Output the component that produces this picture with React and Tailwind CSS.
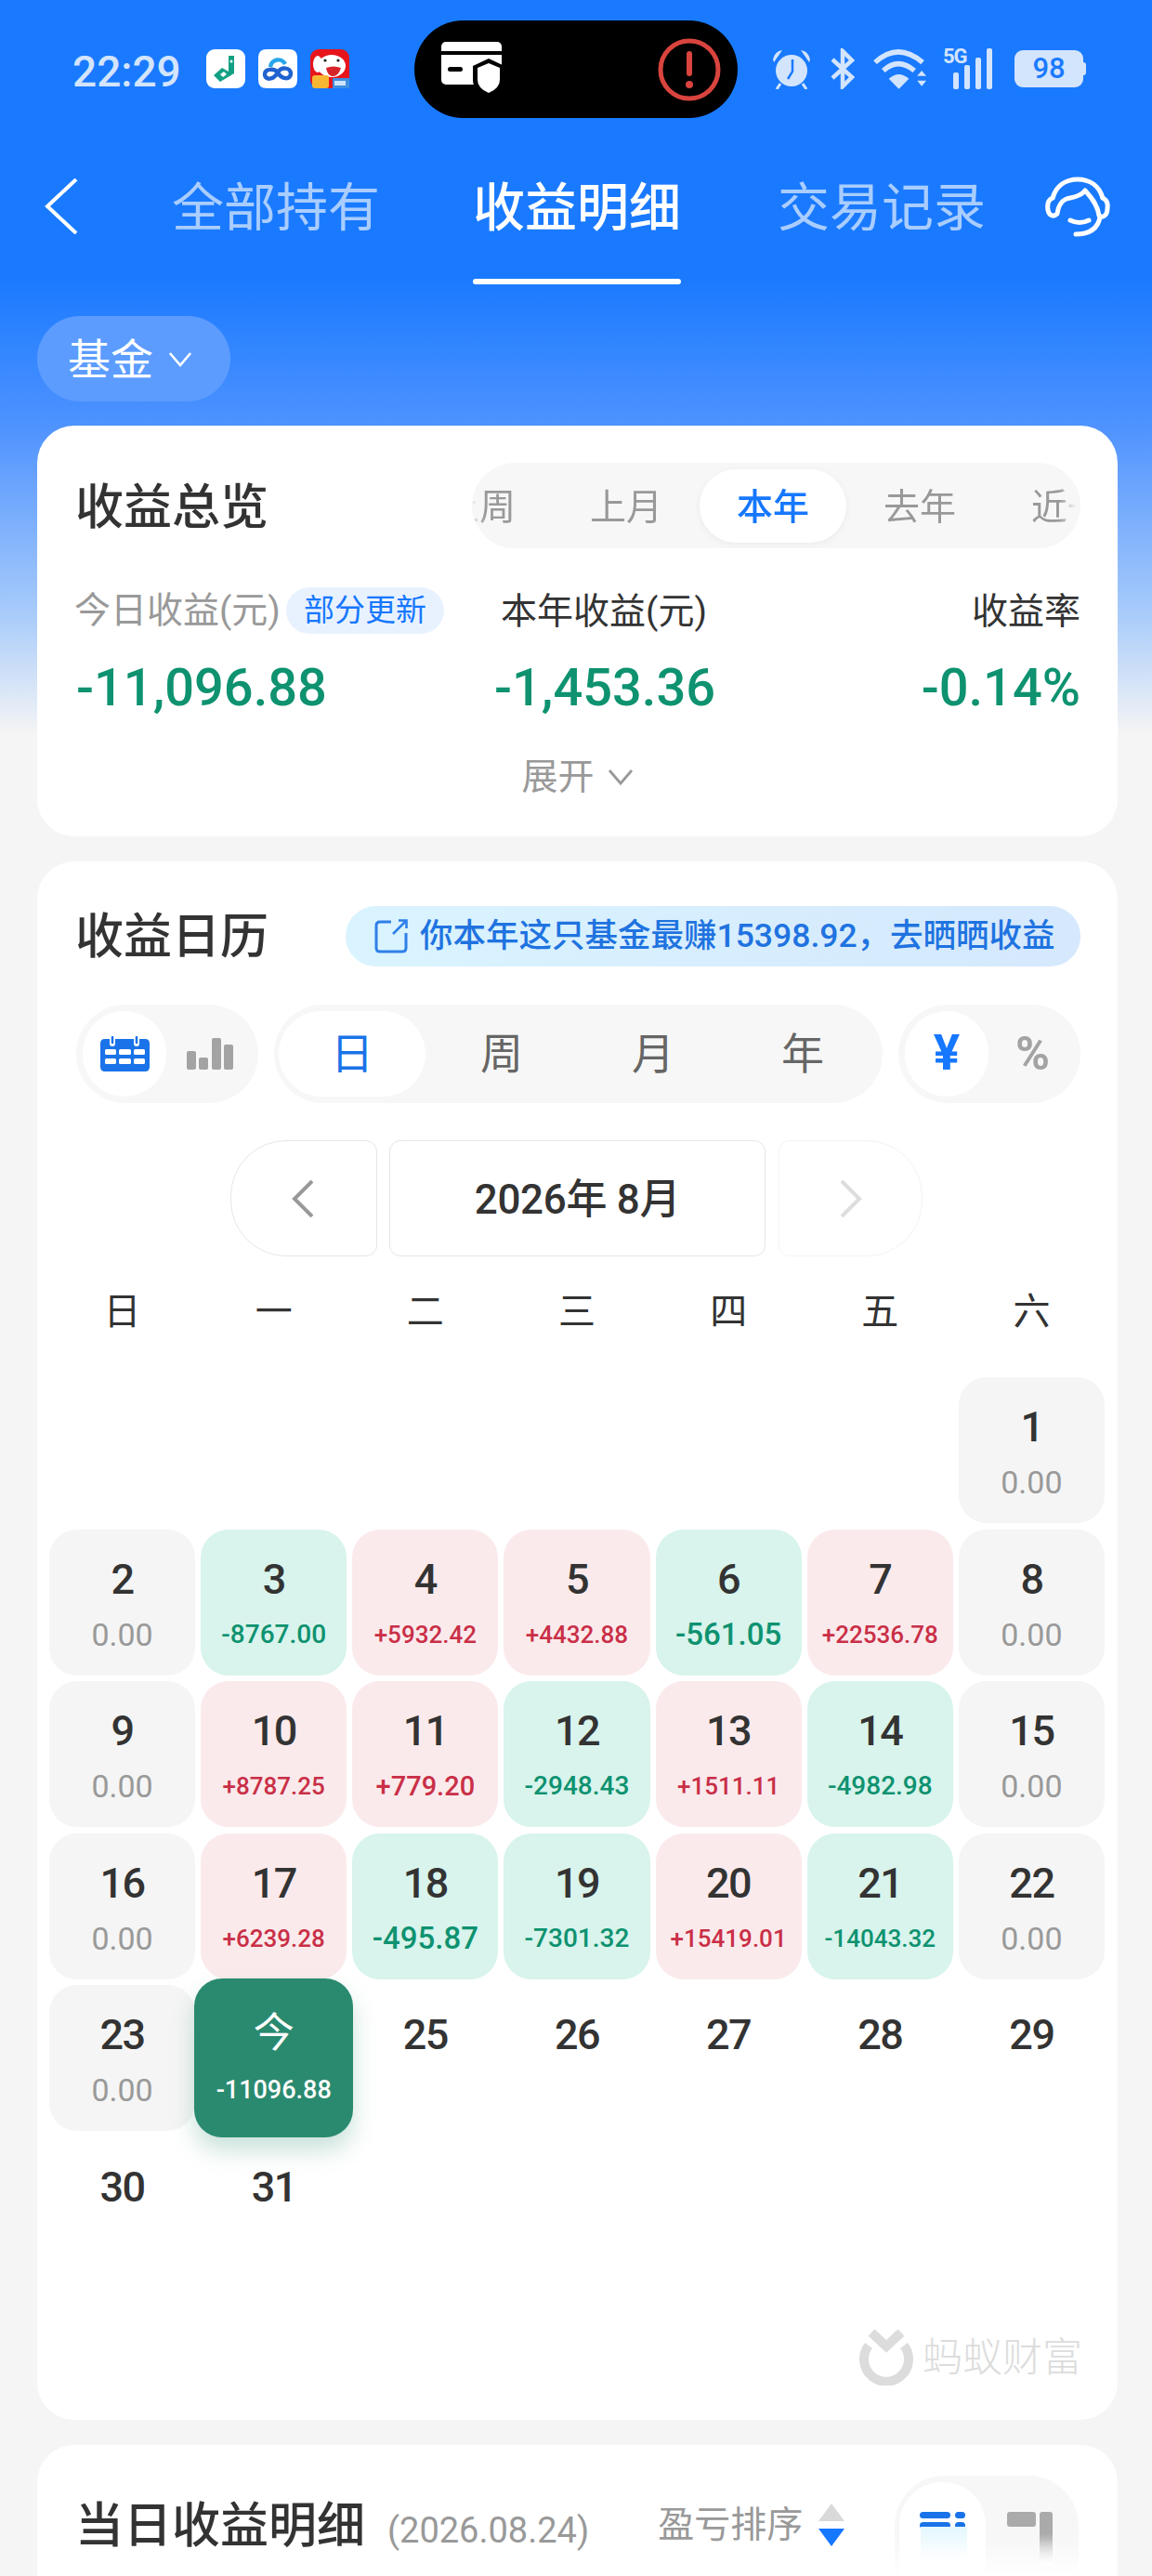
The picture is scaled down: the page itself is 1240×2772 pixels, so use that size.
const weekdays = ["日", "一", "二", "三", "四", "五", "六"]

// value font shrinks with the number so it fits the cell, same as the app does
const days = [
  { d: 1, v: "0.00" },
  { d: 2, v: "0.00" },
  { d: 3, v: "-8767.00", t: "g", s: "text-[28px]" },
  { d: 4, v: "+5932.42", t: "r", s: "text-[26px]" },
  { d: 5, v: "+4432.88", t: "r", s: "text-[26px]" },
  { d: 6, v: "-561.05", t: "g", s: "text-[33px]" },
  { d: 7, v: "+22536.78", t: "r", s: "text-[26px]" },
  { d: 8, v: "0.00" },
  { d: 9, v: "0.00" },
  { d: 10, v: "+8787.25", t: "r", s: "text-[26px]" },
  { d: 11, v: "+779.20", t: "r", s: "text-[29px]" },
  { d: 12, v: "-2948.43", t: "g", s: "text-[28px]" },
  { d: 13, v: "+1511.11", t: "r", s: "text-[26px]" },
  { d: 14, v: "-4982.98", t: "g", s: "text-[28px]" },
  { d: 15, v: "0.00" },
  { d: 16, v: "0.00" },
  { d: 17, v: "+6239.28", t: "r", s: "text-[26px]" },
  { d: 18, v: "-495.87", t: "g", s: "text-[33px]" },
  { d: 19, v: "-7301.32", t: "g", s: "text-[28px]" },
  { d: 20, v: "+15419.01", t: "r", s: "text-[26px]" },
  { d: 21, v: "-14043.32", t: "g", s: "text-[26px]" },
  { d: 22, v: "0.00" },
  { d: 23, v: "0.00" },
]

const cellBg = { g: "bg-[#d8f4ec]", r: "bg-[#fbeaec]" }
const cellText = { g: "text-[#0e9270] font-medium", r: "text-[#c92f47] font-medium" }

function DayCell({ d, v, t, s }) {
  return (
    <div className={`flex flex-col items-center rounded-[30px] pt-[32px] ${cellBg[t] ?? "bg-[#f5f5f5]"}`}>
      <span className="text-[45px] leading-[44px] font-medium tracking-[-1.5px] text-[#333]">{d}</span>
      <span className={`mt-[17px] h-[40px] leading-[40px] ${s ?? "text-[34px]"} ${cellText[t] ?? "text-[#999]"}`}>{v}</span>
    </div>
  )
}

function PlainDay({ d }) {
  return (
    <div className="flex justify-center pt-[32px]">
      <span className="text-[45px] leading-[44px] font-medium tracking-[-1.5px] text-[#333]">{d}</span>
    </div>
  )
}

function Chevron({ className }) {
  return (
    <svg viewBox="0 0 28 18" className={className} fill="none" stroke="currentColor" strokeWidth="2.8">
      <polyline points="2,2 14,16 26,2" />
    </svg>
  )
}

function JdIcon() {
  return (
    <svg viewBox="0 0 42 42" className="w-[42px] h-[42px]">
      <rect width="42" height="42" rx="9" fill="#e8141c" />
      <ellipse cx="23" cy="18" rx="15" ry="12" fill="#fff" />
      <ellipse cx="8" cy="16" rx="5" ry="9" fill="#fff" />
      <path d="M17 20 Q25 17 33 20 Q30 30 23 29 Q18 27 17 20Z" fill="#d8232a" />
      <circle cx="16" cy="12" r="1.6" fill="#222" />
      <circle cx="30" cy="12" r="1.6" fill="#222" />
      <rect x="2" y="28" width="18" height="14" rx="3" fill="#f7b733" />
      <rect x="24" y="31" width="18" height="11" fill="#3f8fe0" />
      <rect x="26" y="34" width="12" height="5" fill="#cfe4fa" />
    </svg>
  )
}

function StatusBar() {
  return (
    <div className="flex h-[185px] pt-[22px]">
      <div className="ml-[78px] w-[144px] flex">
        <span className="mt-[29px] text-[46px] leading-[52px] font-medium text-[#d3e4fd]">22:29</span>
      </div>
      <div className="flex mt-[31px] gap-[14px] h-[42px]">
        <svg viewBox="0 0 42 42" className="w-[42px] h-[42px]">
          <rect width="42" height="42" rx="9" fill="#fff" />
          <path d="M30 7 H24 V24 L17 20 L8 28 L15 35 L30 26Z" fill="#12a084" />
          <circle cx="27" cy="13" r="1.5" fill="#fff" />
          <path d="M15 27 L19 24 L22 27 L18 30Z" fill="#fff" />
        </svg>
        <svg viewBox="0 0 42 42" className="w-[42px] h-[42px]">
          <path d="M9 0 H33 Q42 0 42 9 V33 Q42 42 33 42 H9 Q0 42 0 33 V9 Q0 0 9 0Z" fill="#fff" />
          <path d="M13 19 A8.5 8.5 0 0 1 29 16" fill="none" stroke="#27a6e8" strokeWidth="4.5" />
          <path d="M21 25 C17 20 7 21 7 27 C7 33 16 34 21 25 C25 18 35 20 35 26 C35 33 25 33 21 25Z" fill="none" stroke="#2062cf" strokeWidth="4.5" />
        </svg>
        <JdIcon />
      </div>
      <div className="ml-[70px] w-[348px] h-[105px] rounded-full bg-black flex items-center justify-between pl-[29px] pr-[18px]">
        <svg viewBox="0 0 66 60" className="w-[66px] h-[60px]">
          <rect x="0" y="0" width="65" height="46" rx="5" fill="#fff" />
          <rect x="0" y="10" width="65" height="4" fill="#000" />
          <rect x="7" y="27" width="16" height="5" rx="2.5" fill="#000" />
          <path d="M51 18 L68 26 V41 Q68 53 51 60 Q34 53 34 41 V26Z" fill="#000" />
          <path d="M51 23 L63 28 V41 Q63 50 51 55 Q39 50 39 41 V28Z" fill="#fff" />
        </svg>
        <svg viewBox="0 0 68 68" className="w-[68px] h-[68px]">
          <circle cx="34" cy="34" r="31" fill="none" stroke="#d9443e" strokeWidth="5" />
          <rect x="31" y="14" width="6" height="27" rx="3" fill="#d9443e" />
          <circle cx="34" cy="50" r="4" fill="#d9443e" />
        </svg>
      </div>
      <div className="ml-[36px] mt-[30px] flex items-center h-[44px] text-[#d3e4fd]">
        <svg viewBox="0 0 44 44" className="w-[44px] h-[44px]" fill="currentColor">
          <circle cx="22" cy="24" r="17" />
          <path d="M2 12 Q4 3 12 2 L3 15Z M42 12 Q40 3 32 2 L41 15Z" />
          <path d="M10 38 L6 44 M34 38 L38 44" stroke="currentColor" strokeWidth="3" />
          <path d="M23 12 V25 L18 33" fill="none" stroke="#1a7aff" strokeWidth="2.5" />
        </svg>
        <svg viewBox="0 0 26 44" className="ml-[20px] w-[26px] h-[44px]" fill="none" stroke="currentColor" strokeWidth="4.5">
          <path d="M2 12 L23 31 L13 41 V3 L23 13 L2 32" />
        </svg>
        <svg viewBox="0 0 60 44" className="ml-[20px] w-[59px] h-[44px]" fill="none" stroke="currentColor" strokeWidth="5.5">
          <path d="M2 15 Q27 -8 54 15" />
          <path d="M11 24 Q27 9 45 24" />
          <path d="M28 44 L17 33 Q28 23 39 33Z" fill="currentColor" stroke="none" />
          <path d="M48 30 L58 30 L53 24Z M48 35 L58 35 L53 41Z" fill="currentColor" stroke="none" />
        </svg>
        <div className="ml-[16px] relative w-[57px] h-[44px] flex items-end gap-[6px] pl-[11px]">
          <span className="absolute left-0 top-[-3px] text-[22px] leading-[24px] font-bold tracking-[-1px]">5G</span>
          <span className="w-[6px] h-[18px] rounded-[2px] bg-[#d3e4fd]" />
          <span className="w-[6px] h-[26px] rounded-[2px] bg-[#d3e4fd]" />
          <span className="w-[6px] h-[34px] rounded-[2px] bg-[#d3e4fd]" />
          <span className="w-[6px] h-[44px] rounded-[2px] bg-[#d3e4fd]" />
        </div>
        <div className="ml-[20px] flex items-center">
          <div className="w-[74px] h-[40px] rounded-[9px] bg-[#d3e4fd] flex items-center justify-center text-[31px] font-medium text-[#1a7aff]">98</div>
          <span className="w-[3px] h-[14px] rounded-r bg-[#d3e4fd]" />
        </div>
      </div>
    </div>
  )
}

function TabBar() {
  return (
    <div className="flex h-[121px] pl-[48px]">
      <svg viewBox="0 0 36 60" className="mt-[7px] w-[36px] h-[60px]" fill="none" stroke="#fff" strokeWidth="4">
        <polyline points="34,1 3,30 34,59" />
      </svg>
      <span className="ml-[101px] w-[224px] h-[76px] text-[56px] leading-[78px] text-[#a9cdff]">全部持有</span>
      <div className="ml-[100px] w-[224px] flex flex-col items-center">
        <span className="h-[76px] text-[56px] leading-[78px] font-medium text-white">收益明细</span>
        <span className="mt-[39px] w-[224px] h-[6px] rounded-full bg-white" />
      </div>
      <span className="ml-[104px] w-[224px] h-[76px] text-[56px] leading-[78px] text-[#a9cdff]">交易记录</span>
      <svg viewBox="0 0 70 65" className="ml-[64px] mt-[5px] w-[70px] h-[65px]" fill="none" stroke="#fff" strokeWidth="5" strokeLinecap="round" strokeLinejoin="round">
        <path d="M8 23 C12 10 22 3 35 3 C48 3 58 10 62 23" />
        <path d="M8 23 C3 25 2 30 3 36 C4 42 9 44 13 40 C14 32 18 24 27 23 C33 22 39 20 43 15 C47 20 56 28 58 42 C62 45 67 42 67 34 C68 28 66 25 62 23" />
        <path d="M59 44 C57 54 50 62 33 62" />
        <path d="M27 47 Q37 52 47 47" />
      </svg>
    </div>
  )
}

function RangeTabs() {
  const items = ["上周", "上月", "本年", "去年", "近一年"]
  return (
    <div className="w-[655px] h-[92px] rounded-[46px] bg-[#f7f7f7] overflow-hidden">
      <div className="h-full flex items-center overflow-hidden [mask-image:linear-gradient(90deg,transparent_0,#000_14px,#000_632px,transparent_650px)]">
        <div className="flex shrink-0 -ml-[71px]">
          {items.map(item => (
            <span
              key={item}
              className={`shrink-0 w-[158px] h-[79px] flex items-center pt-[4px] rounded-[40px] text-[39px] whitespace-nowrap ${
                item === "近一年" ? "justify-start pl-[41px]" : "justify-center"
              } ${
                item === "本年" ? "bg-white text-[#1677ff] font-medium shadow-[0_2px_8px_rgba(0,0,0,0.05)]" : "text-[#999]"
              }`}
            >
              {item}
            </span>
          ))}
        </div>
      </div>
    </div>
  )
}

function OverviewCard() {
  return (
    <div className="ml-[40px] mr-[37px] h-[442px] rounded-[40px] bg-white">
      <div className="flex items-center justify-between pt-[40px] pl-[41px] pr-[40px]">
        <h2 className="h-[92px] text-[52px] leading-[98px] font-medium text-[#333]">收益总览</h2>
        <RangeTabs />
      </div>
      <div className="mt-[42px] mx-[40px] grid grid-cols-[452px_236px_1fr]">
        <div className="flex items-center h-[50px]">
          <span className="text-[39px] leading-[52px] text-[#999]">今日收益(元)</span>
          <span className="ml-[6px] w-[170px] h-[50px] rounded-[25px] bg-[#e8f2ff] text-[33px] leading-[50px] text-center text-[#1677ff]">部分更新</span>
        </div>
        <div className="h-[50px] text-[39px] leading-[52px] text-[#333] text-center whitespace-nowrap">本年收益(元)</div>
        <div className="h-[50px] text-[39px] leading-[52px] text-[#333] text-right">收益率</div>
        <div className="mt-[23px] pl-[2px] text-[56px] leading-[70px] font-medium text-[#0e9270]">-11,096.88</div>
        <div className="mt-[23px] text-[56px] leading-[70px] font-medium text-[#0e9270] text-center whitespace-nowrap">-1,453.36</div>
        <div className="mt-[23px] text-[56px] leading-[70px] font-medium text-[#0e9270] text-right">-0.14%</div>
      </div>
      <div className="mt-[36px] flex items-center justify-center text-[#999]">
        <span className="text-[39px] leading-[50px]">展开</span>
        <Chevron className="ml-[14px] w-[28px] h-[18px]" />
      </div>
    </div>
  )
}

function CalendarControls() {
  return (
    <div className="mt-[41px] ml-[42px] mr-[40px] flex justify-between">
      <div className="w-[196px] h-[106px] rounded-[53px] bg-[#f7f7f7] flex items-center pl-[7px]">
        <div className="w-[90px] h-[92px] rounded-[46px] bg-white flex items-center justify-center">
          <svg viewBox="0 0 53 38" className="w-[53px] h-[38px]">
            <path d="M5 3 H48 Q53 3 53 8 V33 Q53 38 48 38 H5 Q0 38 0 33 V8 Q0 3 5 3Z" fill="#1a73e8" />
            <path d="M13 0 V8 M39 0 V8" stroke="#fff" strokeWidth="6" strokeLinecap="round" />
            <path d="M13 1 V7 M39 1 V7" stroke="#1a73e8" strokeWidth="2.5" strokeLinecap="round" />
            <rect x="5" y="14" width="12" height="6" rx="1.5" fill="#fff" />
            <rect x="20" y="14" width="13" height="6" rx="1.5" fill="#fff" />
            <rect x="36" y="14" width="12" height="6" rx="1.5" fill="#fff" />
            <rect x="5" y="24" width="12" height="6" rx="1.5" fill="#fff" />
            <rect x="20" y="24" width="13" height="6" rx="1.5" fill="#fff" />
            <rect x="36" y="24" width="12" height="6" rx="1.5" fill="#fff" />
          </svg>
        </div>
        <svg viewBox="0 0 50 34" className="ml-[22px] w-[50px] h-[34px]" fill="#a3a3a3">
          <rect x="0" y="14" width="10" height="20" rx="2" />
          <rect x="13" y="21" width="10" height="13" rx="2" />
          <rect x="27" y="0" width="10" height="34" rx="2" />
          <rect x="40" y="7" width="10" height="27" rx="2" />
        </svg>
      </div>
      <div className="w-[655px] h-[106px] rounded-[53px] bg-[#f7f7f7] flex items-center pl-[5px] text-[46px] leading-[50px] text-[#666]">
        <span className="w-[158px] h-[92px] rounded-[46px] bg-white flex items-center justify-center text-[#1a73e8]">日</span>
        <span className="w-[164px] text-center">周</span>
        <span className="w-[162px] text-center">月</span>
        <span className="w-[160px] text-center">年</span>
      </div>
      <div className="w-[196px] h-[106px] rounded-[53px] bg-[#f7f7f7] flex items-center pl-[7px]">
        <span className="w-[90px] h-[92px] rounded-[46px] bg-white flex items-center justify-center text-[53px] font-bold text-[#1677ff]">¥</span>
        <span className="ml-[29px] text-[50px] font-bold text-[#a3a3a3]">%</span>
      </div>
    </div>
  )
}

function CalendarCard() {
  return (
    <div className="mt-[27px] ml-[40px] mr-[37px] h-[1677px] rounded-[40px] bg-white">
      <div className="flex items-center justify-between pt-[48px] pl-[41px] pr-[40px]">
        <h2 className="h-[65px] text-[52px] leading-[68px] font-medium text-[#333]">收益日历</h2>
        <div className="w-[791px] h-[65px] rounded-[33px] bg-[linear-gradient(90deg,#d9f4ff,#d5e8fd)] flex items-center pl-[31px]">
          <svg viewBox="0 0 36 37" className="w-[36px] h-[37px] shrink-0" fill="none" stroke="#2f7fe8" strokeWidth="3">
            <path d="M18 3 H6 Q2 3 2 7 V31 Q2 35 6 35 H30 Q34 35 34 31 V15" />
            <path d="M20 16 L34 2 M26 1.5 H34.5 V10" strokeWidth="2.6" />
          </svg>
          <span className="ml-[13px] text-[35.5px] leading-[65px] font-medium text-[#1f73e0] whitespace-nowrap">你本年这只基金最赚15398.92，去晒晒收益</span>
        </div>
      </div>

      <CalendarControls />

      <div className="mt-[40px] ml-[208px] flex items-stretch h-[125px]">
        <div className="w-[158px] rounded-l-[60px] rounded-r-[12px] border border-[#e6e6e6] flex items-center pl-[65px]">
          <svg viewBox="0 0 24 40" className="w-[24px] h-[40px]" fill="none" stroke="#999" strokeWidth="4">
            <polyline points="22,1 3,20 22,39" />
          </svg>
        </div>
        <div className="ml-[13px] w-[405px] rounded-[12px] border border-[#e6e6e6] flex items-center justify-center pt-[2px] text-[44px] font-medium tracking-[-0.3px] text-[#333]">
          2026年 8月
        </div>
        <div className="ml-[14px] w-[155px] rounded-r-[60px] rounded-l-[12px] border border-[#f3f3f3] flex items-center pl-[65px]">
          <svg viewBox="0 0 24 40" className="w-[24px] h-[40px]" fill="none" stroke="#ddd" strokeWidth="4">
            <polyline points="2,1 21,20 2,39" />
          </svg>
        </div>
      </div>

      <div className="mt-[35px] pl-[13px] pr-[14px] grid grid-cols-7 gap-x-[6px] text-center text-[40px] leading-[50px] text-[#333]">
        {weekdays.map(w => <span key={w}>{w}</span>)}
      </div>

      <div className="mt-[45px] pl-[13px] pr-[14px] grid grid-cols-7 gap-x-[6px] gap-y-[6.5px] auto-rows-[157px]">
        <div /><div /><div /><div /><div /><div />
        {days.map(day => <DayCell key={day.d} {...day} />)}
        {/* today sits a bit bigger than its neighbours */}
        <div className="relative z-10 -mx-[7px] -my-[7px] rounded-[30px] bg-[#2a8a70] shadow-[0_14px_24px_rgba(42,138,112,0.25)] flex flex-col items-center pt-[37px]">
          <span className="text-[44px] leading-[44px] text-white">今</span>
          <span className="mt-[19px] h-[40px] leading-[40px] text-[27px] font-medium text-white">-11096.88</span>
        </div>
        {[25, 26, 27, 28, 29, 30, 31].map(d => <PlainDay key={d} d={d} />)}
      </div>

      <div className="mt-[50px] pr-[38px] flex justify-end items-center text-[#dcdcdc]">
        <svg viewBox="0 0 58 60" className="w-[58px] h-[60px]" fill="none" stroke="#dcdcdc">
          <path d="M10 17 A24 24 0 1 0 48 17" strokeWidth="10" />
          <path d="M13 3 L29 18 L45 3" strokeWidth="10" />
        </svg>
        <span className="ml-[10px] text-[43px] leading-[60px] font-light">蚂蚁财富</span>
      </div>
    </div>
  )
}

function DetailCard() {
  return (
    <div className="mt-[27px] ml-[40px] mr-[37px] h-[300px] rounded-t-[40px] bg-white flex pt-[33px] pl-[41px]">
      <h2 className="mt-[22px] text-[52px] leading-[65px] font-medium text-[#333] whitespace-nowrap">当日收益明细</h2>
      <span className="ml-[24px] mt-[29px] text-[38px] leading-[60px] text-[#999] whitespace-nowrap">(2026.08.24)</span>
      <span className="ml-[74px] mt-[23px] text-[39px] leading-[60px] text-[#999] whitespace-nowrap">盈亏排序</span>
      <svg viewBox="0 0 28 46" className="ml-[17px] mt-[30px] w-[28px] h-[46px]">
        <path d="M14 0 L28 19 H0Z" fill="#d9d9d9" />
        <path d="M0 27 H28 L14 46Z" fill="#1677ff" />
      </svg>
      <div className="relative ml-[54px] w-[198px] h-[108px] rounded-t-[54px] bg-[#f7f7f7] flex pt-[7px] pl-[5px] overflow-hidden">
        <div className="w-[93px] h-[101px] rounded-t-[46px] bg-white flex justify-center pt-[32px]">
          <svg viewBox="0 0 49 18" className="w-[49px] h-[18px]" fill="#1a73e8">
            <rect x="0" y="0" width="33" height="7" rx="3.5" />
            <rect x="38" y="0" width="11" height="7" rx="3.5" />
            <rect x="0" y="11" width="33" height="7" rx="3.5" />
            <rect x="38" y="11" width="11" height="7" rx="3.5" />
          </svg>
        </div>
        <div className="ml-[23px] mt-[32px] flex gap-[4px]">
          <span className="w-[31px] h-[16px] rounded-[3px] bg-[#aaa]" />
          <span className="w-[14px] h-[57px] rounded-t-[3px] bg-[linear-gradient(180deg,#aaa_40%,#fff)]" />
        </div>
        <div className="absolute left-[28px] top-[55px] w-[50px] h-[40px] bg-[linear-gradient(180deg,#e3f7fd,#fff)]" />
        <div className="absolute left-0 right-0 bottom-0 h-[40px] bg-[linear-gradient(180deg,rgba(255,255,255,0),#fff)]" />
      </div>
    </div>
  )
}

export default function App() {
  return (
    <div className="h-[2772px] overflow-hidden [font-family:Roboto,'Noto_Sans_CJK_SC',sans-serif] bg-[linear-gradient(180deg,#1a7aff_0,#1a7aff_300px,#4f93ff_460px,#a8cbfa_660px,#f5f5f5_790px)]">
      <StatusBar />
      <TabBar />
      <div className="ml-[40px] mt-[34px] w-[208px] h-[92px] rounded-[46px] bg-[#5c9cff] flex items-center pl-[33px] text-white">
        <span className="text-[46px] leading-[54px] pt-[2px]">基金</span>
        <Chevron className="ml-[16px] w-[26px] h-[17px]" />
      </div>
      <div className="mt-[26px]">
        <OverviewCard />
        <CalendarCard />
        <DetailCard />
      </div>
    </div>
  )
}
